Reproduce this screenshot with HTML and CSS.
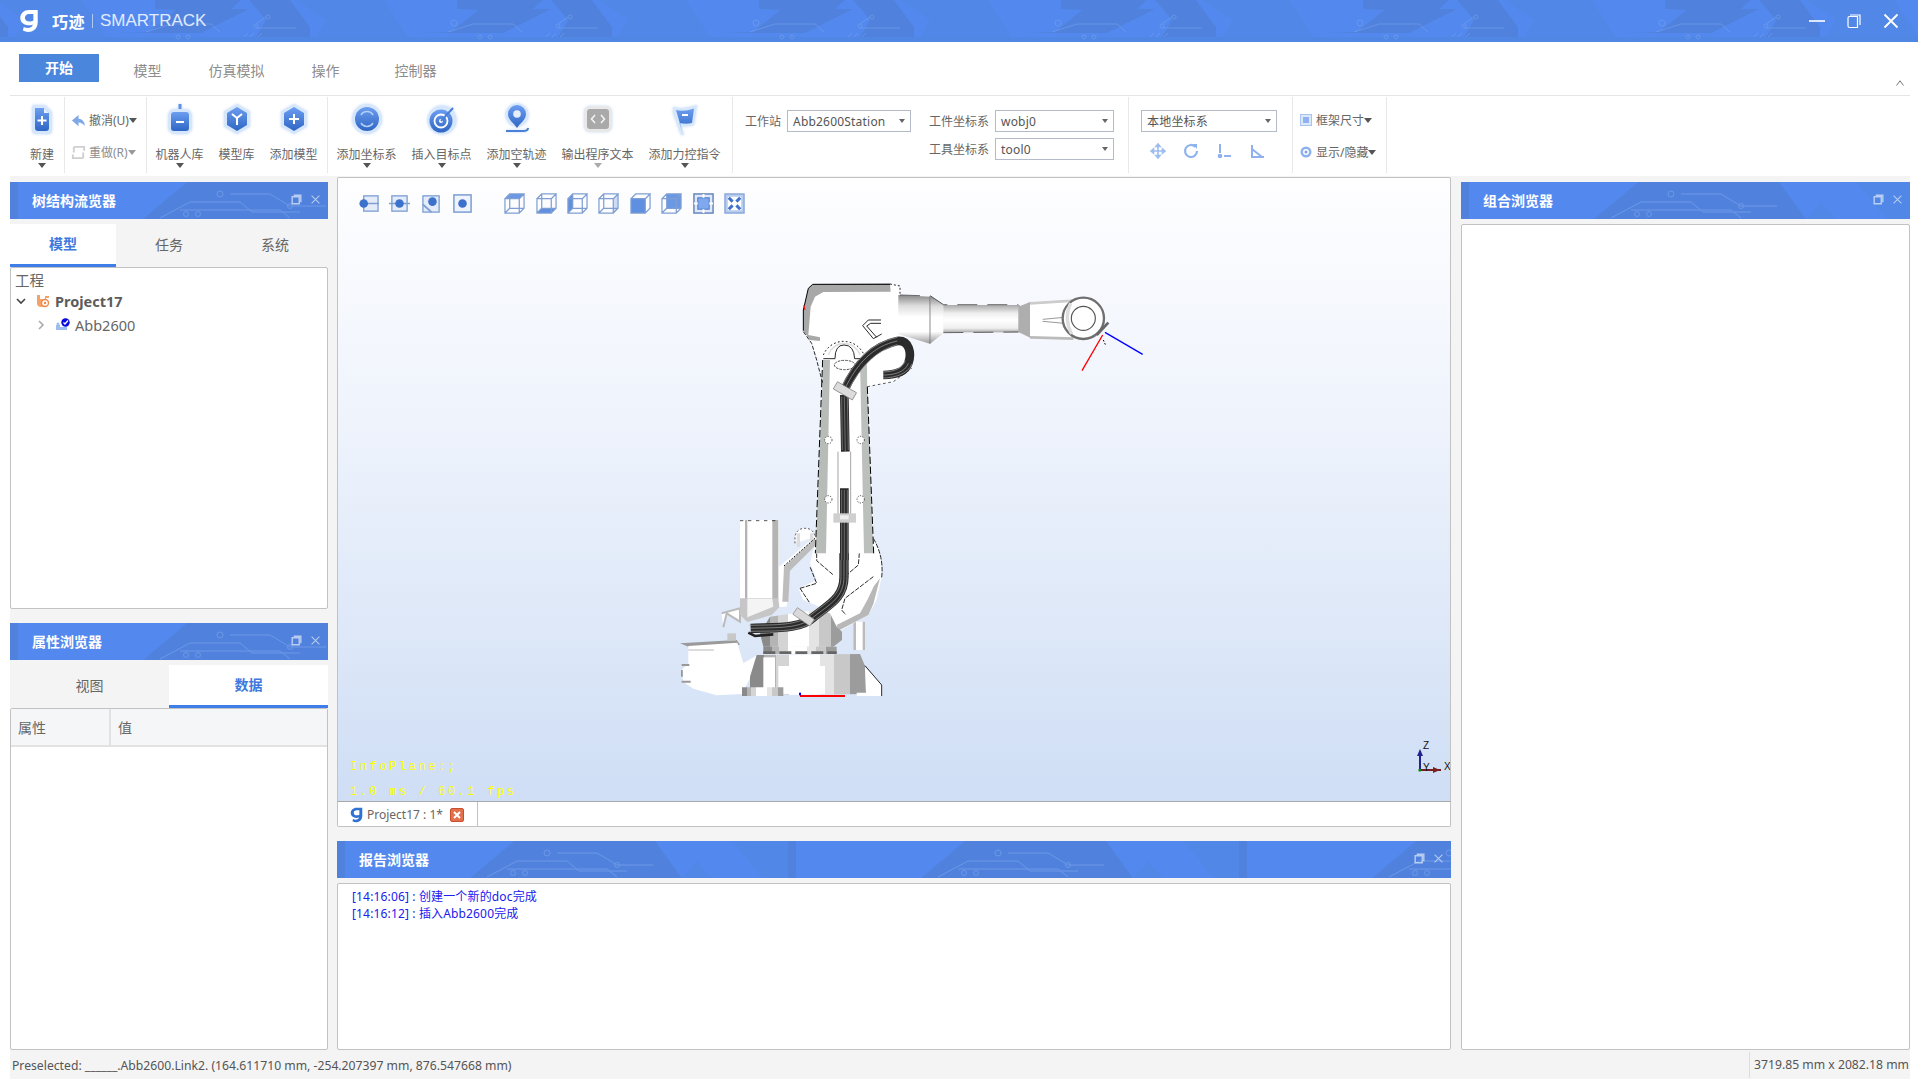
FILE: index.html
```html
<!DOCTYPE html>
<html lang="zh">
<head>
<meta charset="utf-8">
<title>巧迹 SMARTRACK</title>
<link rel="stylesheet" href="styles.css">
</head>
<body>
<svg class="defs" width="0" height="0" aria-hidden="true">
  <defs>
    <pattern id="pat-title" width="302" height="42" patternUnits="userSpaceOnUse" x="116">
      <rect width="302" height="42" fill="#5389ee"/>
      <path d="M39 0H125L115 9H133L85 33H0L33 32L60 10L39 9Z" fill="#5082dd"/>
      <path d="M133 0H174L194 27V37H140L150 20Z" fill="#5082dd"/>
      <path d="M180 0H268L292 37H200L210 20Z" fill="#5187e6"/>
      <rect y="37" width="302" height="5" fill="#5086e4"/>
      <g fill="none" stroke="#7ba3ec" stroke-width="1" opacity=".5">
        <path d="M30 32L55 24H95L104 32"/><circle cx="36" cy="23" r="3"/><circle cx="62" cy="37" r="2"/><circle cx="72" cy="37" r="2"/>
        <path d="M140 28H180M140 24L150 17"/><circle cx="152" cy="17" r="2"/><circle cx="140" cy="26" r="2"/><path d="M128 37L132 33M134 37L138 33M142 37L146 33"/>
      </g>
    </pattern>
    <pattern id="pat-dock" width="451" height="37" patternUnits="userSpaceOnUse">
      <rect width="451" height="37" fill="#5389ee"/>
      <path d="M0 0H8V37H0Z" fill="#5082dd"/>
      <path d="M133 37L177 0H318L345 37Z" fill="#5082dd"/>
      <path d="M345 37L360 20L375 37Z" fill="#5187e6"/>
      <path d="M395 0H451V37H425Z" fill="#5187e6"/>
      <g fill="none" stroke="#7ba3ec" stroke-width="1" opacity=".6">
        <path d="M150 36L180 20H230L242 30H290M170 28H270L280 36M220 12H260L280 24H316"/>
        <circle cx="176" cy="32" r="2.500"/><circle cx="188" cy="32" r="2.500"/><circle cx="280" cy="24" r="2.500"/><circle cx="210" cy="12" r="3"/>
      </g>
    </pattern>
    <linearGradient id="g-blue" x1="0" y1="0" x2="0" y2="1"><stop offset="0" stop-color="#6c9ef0"/><stop offset="1" stop-color="#2f66c4"/></linearGradient>
    <linearGradient id="g-v" x1="0" y1="0" x2="0" y2="1"><stop offset="0" stop-color="#888"/><stop offset=".22" stop-color="#ddd"/><stop offset=".45" stop-color="#fff"/><stop offset=".75" stop-color="#fff"/><stop offset="1" stop-color="#999"/></linearGradient>
    <linearGradient id="g-rod" x1="0" y1="0" x2="0" y2="1"><stop offset="0" stop-color="#aaa"/><stop offset=".3" stop-color="#eee"/><stop offset=".55" stop-color="#fff"/><stop offset=".85" stop-color="#eee"/><stop offset="1" stop-color="#aaa"/></linearGradient>
    <linearGradient id="g-h" x1="0" y1="0" x2="1" y2="0">
      <stop offset="0" stop-color="#8a8a8a"/><stop offset=".12" stop-color="#8a8a8a"/>
      <stop offset=".12" stop-color="#b4b4b4"/><stop offset=".22" stop-color="#b4b4b4"/>
      <stop offset=".22" stop-color="#d4d4d4"/><stop offset=".34" stop-color="#d4d4d4"/>
      <stop offset=".34" stop-color="#fff"/><stop offset=".6" stop-color="#fff"/>
      <stop offset=".6" stop-color="#e4e4e4"/><stop offset=".72" stop-color="#e4e4e4"/>
      <stop offset=".72" stop-color="#c8c8c8"/><stop offset=".86" stop-color="#c8c8c8"/>
      <stop offset=".86" stop-color="#9c9c9c"/><stop offset="1" stop-color="#9c9c9c"/>
    </linearGradient>
    <symbol id="logo9" viewBox="0 0 18 22"><path d="M9 1C4.500 1 1 4.200 1 8.200S4.500 15 9 15c1.300 0 2.500-.3 3.500-.8-.4 2-2 3.300-4.500 3.300-1.300 0-2.500-.3-3.800-1l-.8 3.300C4.900 20.600 6.500 21 8.300 21 13.600 21 17 17.500 17 12V1H9Zm0 3.500h4v6c-1 .7-2.300 1-3.600 1-2.500 0-4.200-1.400-4.200-3.400S6.800 4.500 9 4.500Z"/></symbol>
    <symbol id="ico-restore" viewBox="0 0 14 14"><path d="M3.500 1.500H12.500V10.500M1.500 3.500H10.500V12.500H1.500Z" fill="none" stroke="currentColor" stroke-width="1.800"/></symbol>
    <symbol id="ico-close" viewBox="0 0 14 14"><path d="M2 2L12 12M12 2L2 12" fill="none" stroke="currentColor" stroke-width="1.300"/></symbol>
  </defs>
</svg>

<header class="titlebar">
  <svg class="fill-layer"><rect width="100%" height="100%" fill="url(#pat-title)"/></svg>
  <svg class="app-logo"><use href="#logo9"/></svg>
  <span class="brand-cn">巧迹</span>
  <span class="brand-sep"></span>
  <span class="brand-en">SMARTRACK</span>
  <div class="win-btns">
    <svg class="win-btn" viewBox="0 0 16 16"><path d="M0 8H16" stroke="#fff" stroke-width="1.600"/></svg>
    <svg class="win-btn" viewBox="0 0 16 16"><path d="M4 2H14V12M2 5Q2 3.500 3.500 3.500H11.500V14.500H3.500Q2 14.500 2 13Z" fill="none" stroke="#fff" stroke-width="1.200"/></svg>
    <svg class="win-btn" viewBox="0 0 16 16"><path d="M1.500 1.500L14.500 14.500M14.500 1.500L1.500 14.500" stroke="#fff" stroke-width="1.800"/></svg>
  </div>
</header>

<nav class="menu">
  <span class="menu-tab active">开始</span>
  <span class="menu-tab">模型</span>
  <span class="menu-tab">仿真模拟</span>
  <span class="menu-tab">操作</span>
  <span class="menu-tab last">控制器</span>
  <svg class="collapse" viewBox="0 0 8 6"><path d="M.5 5.500L4 .8L7.500 5.500" fill="none" stroke="#777" stroke-width="1"/></svg>
</nav>

<section class="ribbon">
  <div class="group g-new">
    <div class="tool tool-new">
      <svg class="tool-ico" viewBox="0 0 32 32"><path d="M7 2H19L26 9V27Q26 31 22 31H10Q6 31 6 27V4Z" fill="#d6e6fb"/><path d="M9 5H18L23 10V25Q23 28 20 28H12Q9 28 9 25Z" fill="url(#g-blue)"/><path d="M18 5L23 10H18Z" fill="#eaf2fe"/><path d="M16 13V22M11.500 17.500H20.500" stroke="#fff" stroke-width="2"/></svg>
      <span class="tool-label">新建</span><i class="caret"></i>
    </div>
  </div>
  <div class="group g-undo">
    <div class="mini">
      <svg class="mini-ico" viewBox="0 0 16 16"><path d="M1 8L8 2V6Q14 6 15 14Q12 10 8 10V14Z" fill="#7fa8e8"/></svg>
      <span>撤消(U)</span><i class="caret small"></i>
    </div>
    <div class="mini dim">
      <svg class="mini-ico" viewBox="0 0 16 16"><path d="M3 2H14V6M13 14H2V10M3 2V8M13 8V14" fill="none" stroke="#cfcfcf" stroke-width="2"/></svg>
      <span>重做(R)</span><i class="caret small"></i>
    </div>
  </div>
  <div class="group g-lib">
    <div class="tool fixed">
      <svg class="tool-ico" viewBox="0 0 32 32"><path d="M16 1V6" stroke="#5f92e2" stroke-width="3"/><rect x="4" y="6" width="24" height="25" rx="7" fill="#d6e6fb"/><rect x="7" y="9" width="18" height="19" rx="3" fill="url(#g-blue)"/><path d="M12 19H20" stroke="#fff" stroke-width="2"/></svg>
      <span class="tool-label">机器人库</span><i class="caret"></i>
    </div>
    <div class="tool fixed">
      <svg class="tool-ico" viewBox="0 0 32 32"><path d="M16 1L29 8.500V23.500L16 31L3 23.500V8.500Z" fill="#d6e6fb"/><path d="M16 4L26 10V22L16 28L6 22V10Z" fill="url(#g-blue)"/><path d="M11 11L16 15L21 11M16 15V22" fill="none" stroke="#fff" stroke-width="2"/></svg>
      <span class="tool-label">模型库</span>
    </div>
    <div class="tool fixed">
      <svg class="tool-ico" viewBox="0 0 32 32"><path d="M16 1L29 8.500V23.500L16 31L3 23.500V8.500Z" fill="#d6e6fb"/><path d="M16 4L26 10V22L16 28L6 22V10Z" fill="url(#g-blue)"/><path d="M16 11V21M11 16H21" stroke="#fff" stroke-width="2"/></svg>
      <span class="tool-label">添加模型</span>
    </div>
  </div>
  <div class="group g-add">
    <div class="tool">
      <svg class="tool-ico" viewBox="0 0 32 32"><circle cx="16" cy="16" r="15" fill="#d6e6fb"/><circle cx="16" cy="16" r="12" fill="url(#g-blue)"/><path d="M10 12A7 7 0 0 1 22 12M22 20A7 7 0 0 1 10 20" fill="none" stroke="#b5d0f6" stroke-width="1.500"/></svg>
      <span class="tool-label">添加坐标系</span><i class="caret"></i>
    </div>
    <div class="tool">
      <svg class="tool-ico" viewBox="0 0 32 32"><circle cx="16" cy="17" r="14.500" fill="#d6e6fb"/><circle cx="15" cy="18" r="11.500" fill="url(#g-blue)"/><circle cx="15" cy="18" r="6.500" fill="none" stroke="#fff" stroke-width="1.800"/><circle cx="15" cy="18" r="2" fill="#fff"/><path d="M15 18L27 5" stroke="#4a80d8" stroke-width="2"/></svg>
      <span class="tool-label">插入目标点</span><i class="caret"></i>
    </div>
    <div class="tool">
      <svg class="tool-ico" viewBox="0 0 32 32"><ellipse cx="16" cy="12" rx="11.500" ry="11.500" fill="#d6e6fb"/><path d="M16 2A9 9 0 0 1 25 11C25 17 19 20 16 25C13 20 7 17 7 11A9 9 0 0 1 16 2Z" fill="url(#g-blue)"/><circle cx="16" cy="11" r="3.800" fill="#e4eefc"/><path d="M5 28H22Q27 28 27 25" fill="none" stroke="#4a80d8" stroke-width="2"/></svg>
      <span class="tool-label">添加空轨迹</span><i class="caret"></i>
    </div>
    <div class="tool">
      <svg class="tool-ico" viewBox="0 0 32 32"><rect x="2" y="3" width="28" height="26" rx="6" fill="#e8e8e8"/><rect x="5" y="6" width="22" height="20" rx="3" fill="#a9a9a9"/><path d="M13 12L9.500 16L13 20M19 12L22.500 16L19 20" fill="none" stroke="#f2f2f2" stroke-width="1.600"/></svg>
      <span class="tool-label">输出程序文本</span><i class="caret light"></i>
    </div>
    <div class="tool">
      <svg class="tool-ico" viewBox="0 0 32 32"><path d="M4 4Q14 7 28 2L25 22Q18 24 12 23L15 32H12L4 10Z" fill="#d6e6fb"/><path d="M7 7Q15 9 25 5.500L23 20Q17 21.500 10.500 20L13.500 29Z" fill="url(#g-blue)"/><path d="M13 12H19" stroke="#fff" stroke-width="2"/></svg>
      <span class="tool-label">添加力控指令</span><i class="caret"></i>
    </div>
  </div>
  <div class="group g-form">
    <div class="form-col">
      <label class="field"><span>工作站</span><span class="combo w123">Abb2600Station<i class="combo-caret"></i></span></label>
    </div>
    <div class="form-col">
      <label class="field"><span>工件坐标系</span><span class="combo w119">wobj0<i class="combo-caret"></i></span></label>
      <label class="field"><span>工具坐标系</span><span class="combo w119">tool0<i class="combo-caret"></i></span></label>
    </div>
  </div>
  <div class="group g-local">
    <span class="combo w136">本地坐标系<i class="combo-caret"></i></span>
    <div class="axis-icons">
      <svg class="axis-ico" viewBox="0 0 16 16"><path d="M8 1V15M1 8H15M8 1L6 3.500H10ZM8 15L6 12.500H10ZM1 8L3.500 6V10ZM15 8L12.500 6V10Z" stroke="#9dbcf0" stroke-width="1.600" fill="#9dbcf0"/></svg>
      <svg class="axis-ico" viewBox="0 0 16 16"><path d="M12.500 4A6 6 0 1 0 14 8" fill="none" stroke="#8fb2ee" stroke-width="2.200"/><path d="M10 1L14 1V6Z" fill="#8fb2ee"/></svg>
      <svg class="axis-ico" viewBox="0 0 16 16"><path d="M4 1V10" stroke="#8fb2ee" stroke-width="2"/><circle cx="4" cy="13" r="2.300" fill="#8fb2ee"/><path d="M8 13H15" stroke="#8fb2ee" stroke-width="2"/></svg>
      <svg class="axis-ico" viewBox="0 0 16 16"><path d="M3 2V14H15M3 6L13 14" fill="none" stroke="#8fb2ee" stroke-width="2"/></svg>
    </div>
  </div>
  <div class="group g-view">
    <div class="mini">
      <svg class="view-ico" viewBox="0 0 12 12"><rect x=".5" y=".5" width="11" height="11" fill="#dbe7fb" stroke="#a9c3f0"/><rect x="3" y="3" width="6" height="6" fill="#8fb2ee"/></svg>
      <span>框架尺寸</span><i class="caret small"></i>
    </div>
    <div class="mini">
      <svg class="view-ico" viewBox="0 0 12 12"><circle cx="6" cy="6" r="5.500" fill="#8fb2ee"/><circle cx="6" cy="6" r="3" fill="#fff"/><circle cx="6" cy="6" r="1.500" fill="#7aa2e6"/></svg>
      <span>显示/隐藏</span><i class="caret small"></i>
    </div>
  </div>
</section>

<main class="workspace">
  <aside class="col-left">
    <div class="dock-head">
      <svg class="fill-layer"><rect width="100%" height="100%" fill="url(#pat-dock)"/></svg>
      <span class="dock-title">树结构流览器</span>
      <svg class="dock-btn"><use href="#ico-restore"/></svg>
      <svg class="dock-btn"><use href="#ico-close"/></svg>
    </div>
    <div class="dock-tabs thirds">
      <span class="dock-tab active">模型</span>
      <span class="dock-tab">任务</span>
      <span class="dock-tab">系统</span>
    </div>
    <div class="box tree">
      <div class="tree-root">工程</div>
      <div class="tree-row proj">
        <svg class="chev" viewBox="0 0 10 10"><path d="M1 3L5 7L9 3" fill="none" stroke="#444" stroke-width="1.600"/></svg>
        <svg class="tree-ico" viewBox="0 0 14 14"><path d="M1 1H4V5H9V2H13V4H10V13H5A4 4 0 0 1 1 9Z" fill="#f5a26a"/><circle cx="9" cy="9" r="3.500" fill="#fff" stroke="#ee8a4a" stroke-width="1.400"/><circle cx="9" cy="9" r="1.200" fill="#ee8a4a"/></svg>
        <b>Project17</b>
      </div>
      <div class="tree-row item">
        <svg class="chev" viewBox="0 0 10 10"><path d="M3 1L7 5L3 9" fill="none" stroke="#aaa" stroke-width="1.600"/></svg>
        <svg class="tree-ico" viewBox="0 0 14 14"><path d="M0 7H4V9H11V12H0Z" fill="#9dbcf0"/><circle cx="2" cy="6" r="1.500" fill="#9dbcf0"/><circle cx="9.500" cy="4.500" r="4.200" fill="#0808e0"/><path d="M7.500 4.500L9 6L12 2.500" fill="none" stroke="#fff" stroke-width="1.300"/></svg>
        <span>Abb2600</span>
      </div>
    </div>
    <div class="dock-head second">
      <svg class="fill-layer"><rect width="100%" height="100%" fill="url(#pat-dock)"/></svg>
      <span class="dock-title">属性浏览器</span>
      <svg class="dock-btn"><use href="#ico-restore"/></svg>
      <svg class="dock-btn"><use href="#ico-close"/></svg>
    </div>
    <div class="dock-tabs halves">
      <span class="dock-tab">视图</span>
      <span class="dock-tab active">数据</span>
    </div>
    <div class="box props">
      <div class="prop-head"><span class="prop-name">属性</span><span class="prop-val">值</span></div>
    </div>
  </aside>

  <section class="col-center">
    <div class="viewport">
      <div class="view-tools">
        <div class="vt-set">
          <svg class="vt" viewBox="0 0 22 22"><rect x="6" y="3" width="15" height="16" fill="#e4ecfa" stroke="#7f9fd4" stroke-width="1.400"/><path d="M6 11H22" stroke="#7f9fd4" stroke-width="1.500"/><circle cx="6" cy="11" r="4.500" fill="#3d72cc"/></svg>
          <svg class="vt" viewBox="0 0 22 22"><rect x="3" y="3" width="16" height="16" fill="#e4ecfa" stroke="#7f9fd4" stroke-width="1.400"/><path d="M0 11H22" stroke="#7f9fd4" stroke-width="1.500"/><circle cx="11" cy="11" r="4.500" fill="#3d72cc"/></svg>
          <svg class="vt" viewBox="0 0 22 22"><rect x="2" y="3" width="17" height="17" fill="#e4ecfa" stroke="#7f9fd4" stroke-width="1.400"/><path d="M2 12L11 20" stroke="#7f9fd4" stroke-width="2"/><circle cx="12" cy="9" r="4.500" fill="#3d72cc"/></svg>
          <svg class="vt" viewBox="0 0 22 22"><rect x="2" y="2" width="18" height="18" fill="#eef3fc" stroke="#7f9fd4" stroke-width="1.600"/><circle cx="11" cy="11" r="4.500" fill="#3d72cc"/></svg>
        </div>
        <div class="vt-set cubes">
          <svg class="vt" viewBox="0 0 22 22"><path d="M1 6L6 1H21L16 6Z" fill="#6a98e4"/><path d="M1 6H16V21H1ZM16 6L21 1V16L16 21M6 1V16H21M6 16L1 21M1 6L6 1H21" fill="none" stroke="#7f9fd4" stroke-width="1.300"/></svg>
          <svg class="vt" viewBox="0 0 22 22"><path d="M1 21L6 16H21L16 21Z" fill="#5f8fe0"/><path d="M1 6H16V21H1ZM16 6L21 1V16L16 21M6 1V16H21M6 16L1 21M1 6L6 1H21" fill="none" stroke="#7f9fd4" stroke-width="1.300"/></svg>
          <svg class="vt" viewBox="0 0 22 22"><path d="M1 6L6 1V16L1 21Z" fill="#5f8fe0"/><path d="M1 6H6V16L1 21Z" fill="#5f8fe0"/><path d="M1 6H16V21H1ZM16 6L21 1V16L16 21M6 1V16H21M6 16L1 21M1 6L6 1H21" fill="none" stroke="#7f9fd4" stroke-width="1.300"/></svg>
          <svg class="vt" viewBox="0 0 22 22"><path d="M16 6L21 1V16L16 21Z" fill="#cfdcf5"/><path d="M1 6H16V21H1ZM16 6L21 1V16L16 21M6 1V16H21M6 16L1 21M1 6L6 1H21" fill="none" stroke="#7f9fd4" stroke-width="1.300"/></svg>
          <svg class="vt" viewBox="0 0 22 22"><path d="M1 6H16V21H1Z" fill="#5f8fe0"/><path d="M1 6H16V21H1ZM16 6L21 1V16L16 21M1 6L6 1H21" fill="none" stroke="#7f9fd4" stroke-width="1.300"/></svg>
          <svg class="vt" viewBox="0 0 22 22"><path d="M6 1H21V16H6Z" fill="#6a98e4"/><path d="M1 6H16V21H1ZM16 6L21 1V16L16 21M6 1V16H21M6 16L1 21M1 6L6 1H21" fill="none" stroke="#7f9fd4" stroke-width="1.300"/></svg>
          <svg class="vt" viewBox="0 0 22 22"><rect x="1" y="1" width="20" height="20" fill="#dfe8f8" stroke="#6a88bd" stroke-width="1.600"/><rect x="5" y="5" width="12" height="12" fill="#7fa8ee" stroke="#4a78c8"/><path d="M11 1V5M11 17V21M1 11H5M17 11H21" stroke="#fff" stroke-width="2"/></svg>
          <svg class="vt" viewBox="0 0 22 22"><rect x="1" y="1" width="20" height="20" fill="#b9cdf0" stroke="#86a4d8" stroke-width="1.400"/><rect x="4" y="4" width="14" height="14" fill="#fff"/><path d="M5 5L9 9M17 5L13 9M5 17L9 13M17 17L13 13" stroke="#3d72cc" stroke-width="3.200"/></svg>
        </div>
      </div>

      <svg class="scene" viewBox="337 177 1114 624">
        <!-- lower part: base, shoulder, boxes -->
        <g transform="translate(660 500) scale(.33333)">
          <path d="M60 430L230 420L240 434L85 440Z" fill="#9a9a9a"/>
          <rect x="202" y="400" width="26" height="22" fill="#c8c8c8"/>
          <path d="M85 438L232 428L250 490L292 465L272 530L246 582L170 586L100 566L70 546L65 510L85 490Z" fill="#fff"/>
          <path d="M85 450H162" stroke="#bbb" stroke-width="3"/>
          <path d="M65 495H88M65 545H92" stroke="#999" stroke-width="6"/>
          <path d="M66 510V530" stroke="#000" stroke-width="2"/>
          <path d="M185 340L240 325V365L200 340L190 382" fill="#fff" stroke="#bbb" stroke-width="6"/>
          <path d="M580 365H615V450H580Z" fill="#fff"/>
          <path d="M580 365H588V450H580ZM608 365H615V450H608Z" fill="#bbb"/>
          <path d="M640 115Q672 170 665 230L650 300L625 345L535 395L500 330L430 300L415 265L470 240L450 190L465 130L390 210L380 320L240 325V60H357V200L465 110Z" fill="#fff"/>
          <path d="M660 235L640 312L625 345L535 392L530 375L600 340L622 300L642 258Z" fill="#b8b8b8"/>
          <path d="M405 130V110Q410 85 435 85Q460 85 465 110" fill="#fff" stroke="#000" stroke-width="2" stroke-dasharray="6 6"/>
          <path d="M415 100V140M455 100V125" stroke="#ddd" stroke-width="10"/>
          <path d="M465 115L372 200L367 305H385L390 212L465 138Z" fill="#bdbdbd"/>
          <path d="M372 198L465 115" stroke="#000" stroke-width="3" stroke-dasharray="5 5"/>
          <path d="M255 60H262V300H255ZM337 60H355V300H337Z" fill="#b4b4b4"/>
          <path d="M240 295H355L358 322L335 345L262 366L240 345Z" fill="#c6c6c6"/>
          <path d="M262 296H337L340 320L262 352Z" fill="#f4f4f4"/>
          <path d="M240 62H355" stroke="#000" stroke-width="2" stroke-dasharray="10 14"/>
          <path d="M470 160V182L520 225M598 160L595 195L560 225M420 265L470 250L450 200M420 265L450 310M640 230L555 295L545 330L558 345M640 115Q672 170 665 232" fill="none" stroke="#000" stroke-width="2.500" stroke-dasharray="14 4"/>
          <path d="M300 400L330 350L470 330L510 340L530 380L546 395V420L520 440H310Z" fill="url(#g-h)"/>
          <rect x="310" y="440" width="220" height="22" fill="url(#g-h)"/>
          <path d="M310 458H530" stroke="#666" stroke-width="8" stroke-dasharray="36 12"/>
          <path d="M290 465L600 462L616 500L618 582L270 586V530Z" fill="url(#g-h)"/>
          <rect x="355" y="498" width="140" height="84" fill="#fff"/>
          <path d="M310 472H345V586H310Z" fill="#fff"/>
          <path d="M246 562H370V588H246Z" fill="url(#g-h)"/>
          <path d="M615 500L665 555V588H590V578H618Z" fill="#fff"/>
          <path d="M615 497L665 555V588" fill="none" stroke="#000" stroke-width="2.500"/>
          <path d="M272 385C350 382 420 388 462 350C510 312 552 292 552 230V0" fill="none" stroke="#2b2b2b" stroke-width="28"/>
          <path d="M268 376C350 374 414 378 456 342C503 304 543 286 543 230V0M270 385C350 382 420 388 462 350C510 312 552 292 552 230V0M272 394C350 392 426 398 468 358C518 320 561 298 561 230V0" fill="none" stroke="#a5a5a5" stroke-width="2"/>
          <path d="M265 398L285 408L340 403" fill="none" stroke="#222" stroke-width="8"/>
          <g transform="rotate(35 430 350)"><rect x="400" y="338" width="62" height="24" fill="#d9d9d9" stroke="#888" stroke-width="2"/></g>
          <ellipse cx="553" cy="137" rx="43" ry="16" fill="none" stroke="#333" stroke-width="2" stroke-dasharray="5 4"/>
          <rect x="520" y="28" width="68" height="40" fill="#cfcfcf"/>
          <rect x="540" y="38" width="28" height="14" fill="#efefef"/>
          <rect x="420" y="585" width="135" height="6" fill="#f00"/>
          <rect x="417" y="578" width="6" height="8" fill="#00f"/>
        </g>
        <!-- upper part: arm -->
        <g transform="translate(660 260) scale(.33333)">
          <path d="M490 295H622L642 880H465Z" fill="#fff"/>
          <path d="M490 296H510L498 880H467Z" fill="#b8bcb8"/>
          <path d="M600 300H620L640 880H612Z" fill="#bcc0bc"/>
          <path d="M488 300L466 880M622 380L641 880" stroke="#000" stroke-width="3" stroke-dasharray="22 8"/>
          <path d="M534 575V770M572 575V770" stroke="#777" stroke-width="2"/>
          <g fill="#fff" stroke="#000" stroke-width="2" stroke-dasharray="4 4">
            <circle cx="505" cy="540" r="11"/><circle cx="602" cy="540" r="11"/><circle cx="505" cy="718" r="11"/><circle cx="602" cy="718" r="11"/>
          </g>
          <path d="M432 150L445 85L460 72L690 70L720 80L722 225L760 260L755 325L700 365L622 380V300H490L470 290L455 250L432 215Z" fill="#fff"/>
          <path d="M445 85L460 72L690 70L692 95L490 96L465 110L452 140L445 225L480 232V243L450 240L430 212V150Z" fill="#a8a8a8"/>
          <path d="M430 212V150L445 85L458 73H690" fill="none" stroke="#000" stroke-width="3"/>
          <path d="M432 135L435 150" stroke="#e11" stroke-width="3"/>
          <path d="M430 215L455 250L470 300L488 370" fill="none" stroke="#000" stroke-width="2.500" stroke-dasharray="12 5"/>
          <path d="M690 72L720 78V125" fill="none" stroke="#000" stroke-width="2.500" stroke-dasharray="6 6"/>
          <path d="M490 285A66 66 0 0 1 612 285" fill="none" stroke="#000" stroke-width="3" stroke-dasharray="5 7"/>
          <path d="M505 285A50 50 0 0 1 600 285" fill="none" stroke="#ddd" stroke-width="4"/>
          <path d="M490 296H525Q525 255 552 255Q582 255 584 296H610" fill="none" stroke="#000" stroke-width="2.500"/>
          <ellipse cx="554" cy="315" rx="31" ry="14" fill="none" stroke="#333" stroke-width="2.500" stroke-dasharray="8 3"/>
          <path d="M663 180H625L608 197L640 236L665 222M663 190H632L620 198L650 232" fill="none" stroke="#000" stroke-width="2.500"/>
          <path d="M622 380L700 365L755 325" fill="none" stroke="#000" stroke-width="2" stroke-dasharray="8 8"/>
          <path d="M715 105L812 110V252L715 222Z" fill="url(#g-v)"/>
          <path d="M812 108L850 132V220L812 250Z" fill="url(#g-v)"/>
          <rect x="850" y="135" width="230" height="82" fill="url(#g-rod)"/>
          <path d="M1075 140L1112 125V234L1075 216Z" fill="#aeaeae"/>
          <path d="M1110 125L1240 116V238L1110 232Z" fill="#fff"/>
          <path d="M1110 126L1240 118L1240 126L1110 134Z" fill="#ccc"/>
          <path d="M1110 228L1240 232V240L1110 236Z" fill="#bbb"/>
          <path d="M810 108V250" stroke="#555" stroke-width="2"/>
          <path d="M720 105L812 108L850 134H1075M850 218L1075 216" fill="none" stroke="#222" stroke-width="2" stroke-dasharray="60 30"/>
          <path d="M1148 178L1235 170M1148 184L1235 192" stroke="#999" stroke-width="3"/>
          <circle cx="1270" cy="175" r="62" fill="#fff" stroke="#6f6f6f" stroke-width="7"/>
          <circle cx="1270" cy="175" r="36" fill="#fff" stroke="#555" stroke-width="3.500"/>
          <path d="M1232 130Q1210 175 1235 222" fill="none" stroke="#ddd" stroke-width="10"/>
          <path d="M1310 225L1345 188" stroke="#666" stroke-width="8"/>
          <path d="M1330 240L1338 258" stroke="#000" stroke-width="3" stroke-dasharray="5 5"/>
          <path d="M552 392C590 310 640 258 712 243C748 240 756 280 745 310C735 338 700 345 670 345" fill="none" stroke="#2b2b2b" stroke-width="26"/>
          <path d="M542 388C582 302 632 250 712 232M552 392C590 310 640 258 712 243M562 396C600 320 650 270 712 254M670 336C705 334 726 326 736 302M670 345C700 345 735 338 745 310M670 354C705 353 742 343 756 312" fill="none" stroke="#a5a5a5" stroke-width="2"/>
          <path d="M553 405L556 575M553 685V900" stroke="#2b2b2b" stroke-width="26"/>
          <path d="M545 410L547 570M553 410L556 575M562 410L565 570M545 690V900M553 690V900M562 690V900" stroke="#aaa" stroke-width="1.500"/>
          <g transform="rotate(30 555 392)"><rect x="522" y="380" width="66" height="25" fill="#dcdcdc" stroke="#777" stroke-width="2"/></g>
          <rect x="520" y="760" width="68" height="28" fill="#cfcfcf"/>
          <rect x="540" y="766" width="26" height="12" fill="#efefef"/>
          <path d="M1335 217L1448 283" stroke="#00f" stroke-width="4"/>
          <path d="M1328 225L1266 332" stroke="#f00" stroke-width="4"/>
        </g>
        <!-- corner axis gizmo -->
        <g class="gizmo">
          <path d="M1420 752V771" stroke="#22228f" stroke-width="2"/>
          <path d="M1420 749L1423 756H1417Z" fill="#22228f"/>
          <path d="M1420 770H1441" stroke="#7a1f1f" stroke-width="2"/>
          <path d="M1440 770L1433 767V773Z" fill="#7a1f1f"/>
          <rect x="1418.500" y="769" width="2.500" height="2.500" fill="#0a8a0a"/>
          <text x="1423" y="749">Z</text>
          <text x="1423" y="771">Y</text>
          <text x="1444" y="770">X</text>
        </g>
      </svg>

      <div class="info-plane">
        <div>InfoPlane:;</div>
        <div>1.0 ms / 60.1 fps</div>
      </div>
    </div>

    <div class="doc-tabs">
      <div class="doc-tab">
        <svg class="doc-logo"><use href="#logo9"/></svg>
        <span>Project17 : 1*</span>
        <svg class="doc-close" viewBox="0 0 14 14"><rect x=".5" y=".5" width="13" height="13" rx="1.500" fill="#e2704c" stroke="#c9502e"/><path d="M4 4L10 10M10 4L4 10" stroke="#fff" stroke-width="2"/></svg>
      </div>
    </div>

    <div class="dock-head report-head">
      <svg class="fill-layer"><rect width="100%" height="100%" fill="url(#pat-dock)"/></svg>
      <span class="dock-title">报告浏览器</span>
      <svg class="dock-btn"><use href="#ico-restore"/></svg>
      <svg class="dock-btn"><use href="#ico-close"/></svg>
    </div>
    <div class="box report">
      <div>[14:16:06] : 创建一个新的doc完成</div>
      <div>[14:16:12] : 插入Abb2600完成</div>
    </div>
  </section>

  <aside class="col-right">
    <div class="dock-head">
      <svg class="fill-layer"><rect width="100%" height="100%" fill="url(#pat-dock)"/></svg>
      <span class="dock-title">组合浏览器</span>
      <svg class="dock-btn"><use href="#ico-restore"/></svg>
      <svg class="dock-btn"><use href="#ico-close"/></svg>
    </div>
    <div class="box combo-box"></div>
  </aside>
</main>

<footer class="status">
  <span class="status-main">Preselected: ______.Abb2600.Link2. (164.611710 mm, -254.207397 mm, 876.547668 mm)</span>
  <span class="status-size">3719.85 mm x 2082.18 mm</span>
</footer>
</body>
</html>
```

FILE: styles.css
```css
* { box-sizing: border-box; }
html, body { height: 100%; }
body {
  margin: 0;
  height: 1079px;
  overflow: hidden;
  display: flex;
  flex-direction: column;
  background: #fff;
  color: #666;
  font: 12px "Noto Sans", "Noto Sans CJK SC", sans-serif;
}
.defs { position: absolute; }
.fill-layer { position: absolute; inset: 0; width: 100%; height: 100%; }

/* title bar */
.titlebar {
  position: relative;
  flex: 0 0 42px;
  display: flex;
  align-items: center;
  padding-left: 19px;
  color: #fff;
}
.titlebar > * { position: relative; }
.titlebar > .fill-layer { position: absolute; }
.app-logo { width: 20px; height: 24px; fill: #fff; }
.brand-cn { margin-left: 13px; font: 700 16px "Noto Sans CJK SC", sans-serif; letter-spacing: .5px; }
.brand-sep { width: 1px; height: 14px; margin: 0 7px; background: rgba(255,255,255,.55); }
.brand-en { font: 17px "Liberation Sans", sans-serif; color: #e2ebff; }
.win-btns { margin-left: auto; margin-right: 19px; display: flex; gap: 21px; align-items: center; }
.win-btn { width: 16px; height: 16px; display: block; }

/* menu */
.menu {
  flex: 0 0 54px;
  display: flex;
  align-items: flex-start;
  padding: 12px 0 0 9px;
  margin: 0 8px 0 10px;
  border-bottom: 1px solid #e6e6e6;
  position: relative;
}
.menu-tab {
  height: 28px;
  padding: 5px 23.5px 0;
  font-size: 14px;
  line-height: 24px;
  color: #8d8d8d;
}
.menu-tab.active {
  width: 80px;
  padding: 0;
  margin-right: 11px;
  text-align: center;
  line-height: 28px;
  font-weight: 700;
  color: #fff;
  background: #4a86dc;
}
.menu-tab.last { margin-left: 8px; }
.collapse { margin-left: auto; margin-top: 26px; margin-right: 6px; width: 8px; height: 6px; }

/* ribbon */
.ribbon { flex: 0 0 80px; display: flex; padding-left: 10px; align-items: flex-start; padding-top: 1px; }
.group { height: 76px; border-right: 1px solid #e8e8e8; display: flex; }
.g-new { width: 55px; padding-left: 10px; }
.g-undo { width: 82px; flex-direction: column; padding: 15px 0 0 6px; gap: 16px; }
.g-lib { width: 181px; padding-left: 4px; }
.g-add { width: 405px; padding-left: 1px; }
.g-form { width: 396px; padding: 13px 0 0 12px; gap: 18px; }
.g-local { width: 164px; flex-direction: column; padding: 13px 0 0 12px; }
.g-view { width: 94px; flex-direction: column; padding: 15px 0 0 7px; gap: 16px; }

.tool { display: flex; flex-direction: column; align-items: center; padding: 6px 7.5px 0; white-space: nowrap; }
.tool-new { width: 44px; padding: 6px 0 0; }
.tool.fixed { width: 57px; padding: 6px 0 0; }
.tool-ico { width: 32px; height: 32px; display: block; filter: drop-shadow(0 0 1.5px #c4d9f8); }
.tool-label { margin-top: 12px; line-height: 16px; font-size: 12px; color: #666; }
.caret {
  width: 0; height: 0;
  border-left: 4.5px solid transparent;
  border-right: 4.5px solid transparent;
  border-top: 5px solid #555;
}
.caret.light { border-top-color: #aaa; }
.caret.small { border-left-width: 4px; border-right-width: 4px; border-top-width: 5px; }
.mini { display: flex; align-items: center; height: 16px; white-space: nowrap; color: #666; }
.mini.dim { color: #8d8d8d; }
.mini.dim .caret { border-top-color: #999; }
.mini-ico { width: 15px; height: 15px; margin-right: 3px; }
.view-ico { width: 12px; height: 12px; margin-right: 4px; }

.form-col { display: flex; flex-direction: column; gap: 6px; }
.field { display: flex; align-items: center; gap: 6px; color: #666; white-space: nowrap; }
.combo {
  position: relative;
  display: block;
  height: 22px;
  border: 1px solid #b4bac8;
  padding-left: 5px;
  font-size: 12px;
  line-height: 21px;
  letter-spacing: .2px;
  color: #555;
  background: #fff;
}
.w123 { width: 124px; }
.w119 { width: 119px; }
.w136 { width: 136px; }
.combo-caret {
  position: absolute;
  right: 5px;
  top: 8px;
  border-left: 3px solid transparent;
  border-right: 3px solid transparent;
  border-top: 4px solid #666;
}
.axis-icons { display: flex; gap: 17px; margin-top: 11px; padding-left: 9px; }
.axis-ico { width: 16px; height: 16px; display: block; }

/* workspace */
.workspace {
  flex: 0 0 874px;
  display: flex;
  margin: 0 8px 0 10px;
  background: #f4f4f4;
  gap: 9px;
}
.col-left { width: 318px; display: flex; flex-direction: column; padding-top: 6px; }
.col-center { width: 1114px; display: flex; flex-direction: column; padding-top: 1px; }
.col-right { width: 449px; margin-left: 1px; display: flex; flex-direction: column; padding-top: 6px; }

.dock-head {
  position: relative;
  flex: 0 0 37px;
  display: flex;
  align-items: center;
  padding-right: 7px;
  gap: 8px;
}
.dock-head > * { position: relative; }
.dock-head > .fill-layer { position: absolute; }
.dock-head.second { margin-top: 14px; }
.dock-title { margin: 0 auto 2px 22px; font-size: 14px; font-weight: 700; color: #fff; }
.dock-btn { width: 11px; height: 11px; color: rgba(255,255,255,.6); margin-bottom: 2px; }

.dock-tabs { flex: 0 0 43px; margin-top: 5px; display: grid; }
.dock-tabs.thirds { grid-template-columns: repeat(3, 1fr); }
.dock-tabs.halves { grid-template-columns: repeat(2, 1fr); }
.dock-tab { text-align: center; font-size: 14px; line-height: 42px; color: #666; }
.dock-tab.active { background: #fff; color: #3f78dc; font-weight: 700; line-height: 40px; border-bottom: 3px solid #3f7de8; }

.box { background: #fff; border: 1px solid #c2c2c2; border-radius: 2px; }
.tree { flex: 0 0 342px; padding: 2px 4px; font-size: 14.500px; color: #666; }
.tree-root { line-height: 20px; margin-left: 0; }
.tree-row { display: flex; align-items: center; height: 25px; }
.proj { padding-left: 1px; height: 22px; }
.proj b { margin-left: 5px; color: #5c5c5c; }
.item { padding-left: 21px; height: 26px; }
.item span { margin-left: 5px; color: #666; }
.chev { width: 10px; height: 10px; margin-right: 10px; }
.tree-ico { width: 14px; height: 14px; }

.props { flex: 1; }
.prop-head { display: flex; height: 38px; background: #f5f6f8; border-bottom: 2px solid #e2e2e2; line-height: 38px; font-size: 14px; color: #666; }
.prop-name { width: 100px; padding-left: 7px; border-right: 2px solid #e2e2e2; }
.prop-val { padding-left: 7px; }

.viewport {
  position: relative;
  flex: 0 0 625px;
  border: 1px solid #c2c2c2;
  border-bottom-color: #a8a8a8;
  border-radius: 2px 2px 0 0;
  background: linear-gradient(#fefeff 0%, #eef3fc 40%, #cfdef5 100%);
  overflow: hidden;
}
.scene { position: absolute; left: -1px; top: -1px; width: 1114px; height: 624px; }
.gizmo text { font: 10px "Liberation Sans", sans-serif; fill: #111; }
.view-tools { position: absolute; left: 20px; top: 15px; display: flex; gap: 31px; z-index: 1; }
.vt-set { display: flex; gap: 10.400px; }
.vt { width: 21px; height: 21px; display: block; }
.info-plane {
  position: absolute;
  left: 12px;
  bottom: -4px;
  font: 12px/25px "Liberation Mono", monospace;
  letter-spacing: 2.600px;
  color: #ffff00;
}

.doc-tabs { flex: 0 0 25px; background: #fff; border: 1px solid #c2c2c2; border-top: 0; border-radius: 0 0 2px 2px; display: flex; }
.doc-tab { width: 140px; display: flex; align-items: center; padding: 1px 0 0 12px; border-right: 1px solid #c2c2c2; font-size: 12px; color: #666; white-space: nowrap; }
.doc-logo { width: 13px; height: 16px; fill: #2f72d2; margin-right: 4px; }
.doc-close { width: 14px; height: 14px; margin-left: 7px; }

.report-head { margin-top: 14px; }
.report { flex: 0 0 167px; margin-top: 5px; padding: 4px 0 0 14px; font-size: 12px; line-height: 17px; letter-spacing: .15px; color: #2020ee; }

.col-right .combo-box { flex: 0 0 826px; margin-top: 5px; }

/* status */
.status {
  flex: 0 0 29px;
  margin: 0 8px 0 10px;
  display: flex;
  align-items: center;
  justify-content: space-between;
  background: #f4f4f4;
  color: #555;
  font-size: 12.200px;
  padding: 1px 0 0 2px;
}
.status-size { border-left: 1px solid #ddd; padding: 0 1px 0 4px; height: 26px; line-height: 26px; }
```
